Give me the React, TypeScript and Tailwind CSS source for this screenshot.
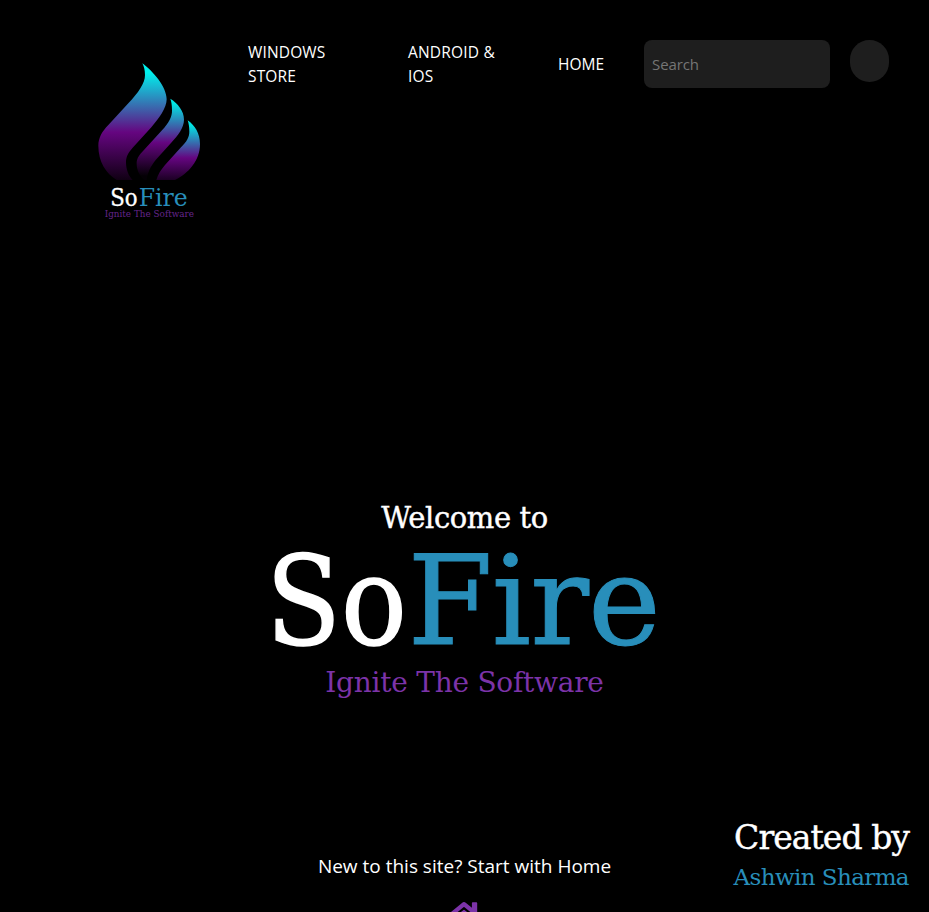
import { FaHome } from "react-icons/fa";

const slab = "font-['DejaVu_Serif',serif]";

function Logo() {
  return (
    <svg viewBox="0 0 420 540" className="block h-[180px] w-[140px]" aria-label="SoFire">
      <defs>
        <linearGradient id="big" gradientUnits="userSpaceOnUse" x1="0" y1="40" x2="0" y2="390">
          <stop offset="0.08" stopColor="#00f0ec" />
          <stop offset="0.59" stopColor="#650580" />
          <stop offset="1" stopColor="#100013" />
        </linearGradient>
        <linearGradient id="mid" gradientUnits="userSpaceOnUse" x1="0" y1="146" x2="0" y2="390">
          <stop offset="0.06" stopColor="#00e8e4" />
          <stop offset="0.54" stopColor="#650580" />
          <stop offset="0.95" stopColor="#040005" />
        </linearGradient>
        <linearGradient id="small" gradientUnits="userSpaceOnUse" x1="0" y1="211" x2="0" y2="390">
          <stop offset="0.08" stopColor="#00e6e4" />
          <stop offset="0.63" stopColor="#650580" />
          <stop offset="1" stopColor="#1c0024" />
        </linearGradient>
      </defs>
      <path fill="url(#big)" d="M187 40C218 63 260 110 260 148C260 174 237 205 214 232L158 293C144 309 138 321 138 337C138 360 147 380 158 390H110C78 370 55 335 55 287C55 263 67 243 85 225L145 160C175 128 195 100 195 75C195 60 192 50 187 40Z" />
      <path fill="url(#mid)" d="M271 146C293 160 312 182 312 209C312 234 293 257 275 277L227 330C211 350 203 368 200 390H194C178 378 170 359 170 341C170 326 175 318 187 305L246 241C266 219 277 200 276 180C276 164 274 155 271 146Z" />
      <path fill="url(#small)" d="M323 211C345 227 360 250 360 282C360 333 325 370 285 390H229C234 374 242 360 255 345L303 292C320 275 328 261 328 245C328 230 326 220 323 211Z" />
      <text x="91" y="467" fontFamily="DejaVu Serif" fontSize="71" fill="#fff" stroke="#fff" strokeWidth="1" textLength="82" lengthAdjust="spacingAndGlyphs">So</text>
      <text x="176" y="467" fontFamily="DejaVu Serif" fontSize="71" fill="#288eba" textLength="147" lengthAdjust="spacingAndGlyphs">Fire</text>
      <text x="74" y="502" fontFamily="DejaVu Serif" fontSize="26" fill="#66258d" textLength="268" lengthAdjust="spacingAndGlyphs">Ignite The Software</text>
    </svg>
  );
}

export default function App() {
  return (
    <div className="flex h-[912px] w-full flex-col overflow-hidden bg-black font-['Open_Sans',sans-serif] text-white">
      <header className="flex h-[230px] items-start pl-20 pt-10">
        <div className="w-[168px] shrink-0 pt-[10px]"><Logo /></div>
        <nav className="flex h-12 shrink-0 items-center text-[15.5px] leading-6">
          <a className="w-40 tracking-[0.15px]">WINDOWS<br />STORE</a>
          <a className="w-[150px] tracking-[0.2px]">ANDROID &amp;<br />IOS</a>
          <a className="w-[86px]">HOME</a>
        </nav>
        <input
          placeholder="Search"
          className="h-12 w-[186px] shrink-0 rounded-lg bg-[#1e1e1e] px-2 text-[15px] tracking-[-0.1px] outline-none placeholder:text-[#757575]"
        />
        <button aria-label="Search" className="ml-5 h-[42px] w-[39px] shrink-0 rounded-full bg-[#1e1e1e]" />
      </header>

      <main className={`flex flex-col items-center pt-[268px] ${slab}`}>
        <h2 className="h-10 whitespace-nowrap text-[29px] leading-10 tracking-[-0.4px] [-webkit-text-stroke:0.4px_white]">Welcome to</h2>
        <h1 className="flex h-[124px] w-[394px] pt-[2px] text-[123px] leading-[124px]">
          <span className="-ml-[2px] w-[142px] origin-left scale-x-[0.89] [-webkit-text-stroke:1.5px_white]">So</span>
          <span className="whitespace-nowrap tracking-[-1px] text-[#288eba] [-webkit-text-stroke:1px_#288eba]">Fire</span>
        </h1>
        <p className="h-10 whitespace-nowrap text-[28px] leading-[42px] tracking-[-0.25px] text-[#7c33a8]">Ignite The Software</p>
      </main>

      <footer className="grid flex-1 grid-cols-[1fr_330px_1fr] items-start pt-[110px]">
        <div />
        <div className="flex flex-col items-center pt-[40px]">
          <p className="whitespace-nowrap text-[19px] leading-7">New to this site? Start with Home</p>
          <FaHome className="mr-[2px] mt-[18px] size-[38px] shrink-0 text-[#7c33a8]" />
        </div>
        <div className={`flex flex-col items-end pr-5 ${slab}`}>
          <p className="whitespace-nowrap text-[33px] leading-[52px] tracking-[-0.95px] [-webkit-text-stroke:0.4px_white]">Created by</p>
          <p className="whitespace-nowrap text-[23px] leading-[26px] tracking-[-0.6px] text-[#288eba]">Ashwin Sharma</p>
        </div>
      </footer>
    </div>
  );
}
